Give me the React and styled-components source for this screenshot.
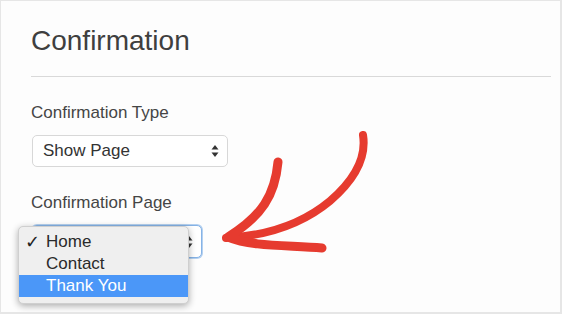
import React from "react";
import styled, { createGlobalStyle } from "styled-components";

const Global = createGlobalStyle`
  html, body { margin: 0; padding: 0; background: #fdfdfd; }
`;

const Frame = styled.div`
  position: relative;
  box-sizing: border-box;
  width: 562px;
  height: 314px;
  overflow: hidden;
  border: solid #e6e6e6;
  border-width: 1px 2px 2px 1px;
  background: #fdfdfd;
  padding: 23px 9px 0 30px;
  display: flex;
  flex-direction: column;
  font-family: "Liberation Sans", Arial, sans-serif;
  color: #444;
`;

const Title = styled.h2`
  margin: 0;
  font-size: 28px;
  line-height: 34px;
  font-weight: normal;
  color: #3f3f3f;
`;

const Rule = styled.div`
  margin-top: 18px;
  height: 1px;
  background: #d9d9d9;
`;

const Field = styled.div`
  display: flex;
  flex-direction: column;
  align-items: flex-start;
  margin-top: 26px;
`;

const Label = styled.label`
  font-size: 17px;
  line-height: 20px;
  color: #454545;
`;

const SelectWrap = styled.div`
  position: relative;
  margin-top: 12px;
  margin-left: 1px;
`;

const SelectBox = styled.div`
  box-sizing: border-box;
  width: ${(p) => p.$width}px;
  height: ${(p) => p.$height}px;
  display: flex;
  align-items: center;
  justify-content: space-between;
  padding: 0 8px 0 10px;
  background: #fff;
  border: 1px solid ${(p) => (p.$focused ? "#86b3e6" : "#d8d8d8")};
  box-shadow: ${(p) => (p.$focused ? "0 0 0 1px #b5d1f0" : "none")};
  border-radius: 5px;
  font-size: 17px;
  line-height: 20px;
  color: #333;
`;

const Menu = styled.ul`
  position: absolute;
  left: -14px;
  top: 1px;
  width: 171px;
  box-sizing: border-box;
  margin: 0;
  padding: 4px 0 6px;
  list-style: none;
  background: #efefef;
  border: 1px solid #cfcfcf;
  border-radius: 5px;
  box-shadow: 0 2px 7px rgba(0, 0, 0, 0.32);
`;

const Item = styled.li`
  position: relative;
  height: 22px;
  padding-left: 27px;
  font-size: 17px;
  line-height: 22px;
  color: ${(p) => (p.$active ? "#fff" : "#2a2a2a")};
  background: ${(p) => (p.$active ? "#4b97f8" : "transparent")};
`;

const Check = styled.span`
  position: absolute;
  left: 6px;
  top: 0;
  font-family: "DejaVu Sans", sans-serif;
  font-size: 18px;
  line-height: 22px;
  color: #222;
`;

const Scribble = styled.svg`
  position: absolute;
  left: -1px;
  top: -1px;
  pointer-events: none;
`;

const Stepper = () => (
  <svg width="8" height="14" viewBox="0 0 8 14">
    <path d="M4 1 L7.5 5.5 L0.5 5.5 Z" fill="#333" />
    <path d="M4 13 L7.5 8.5 L0.5 8.5 Z" fill="#333" />
  </svg>
);

export default function App() {
  return (
    <>
      <Global />
      <Frame>
        <Title>Confirmation</Title>
        <Rule />

        <Field>
          <Label>Confirmation Type</Label>
          <SelectWrap>
            <SelectBox $width={196} $height={32}>
              <span>Show Page</span>
              <Stepper />
            </SelectBox>
          </SelectWrap>
        </Field>

        <Field>
          <Label>Confirmation Page</Label>
          <SelectWrap>
            {/* closed select sits under the open list, its value hidden by it */}
            <SelectBox $width={170} $height={33} $focused>
              <span />
              <Stepper />
            </SelectBox>
            <Menu>
              <Item>
                <Check>✓</Check>Home
              </Item>
              <Item>Contact</Item>
              <Item $active>Thank You</Item>
            </Menu>
          </SelectWrap>
        </Field>

        <Scribble width="562" height="314" viewBox="0 0 562 314">
          <g fill="none" stroke="#e63b2f" strokeLinecap="round" strokeLinejoin="round">
            <path strokeWidth="8" d="M363 135 C 367 160, 352 182, 330 201 C 300 226, 262 236, 226 238" />
            <path strokeWidth="9" d="M278 162 C 275 195, 262 216, 228 237 C 252 247, 290 245, 322 248" />
          </g>
        </Scribble>
      </Frame>
    </>
  );
}
